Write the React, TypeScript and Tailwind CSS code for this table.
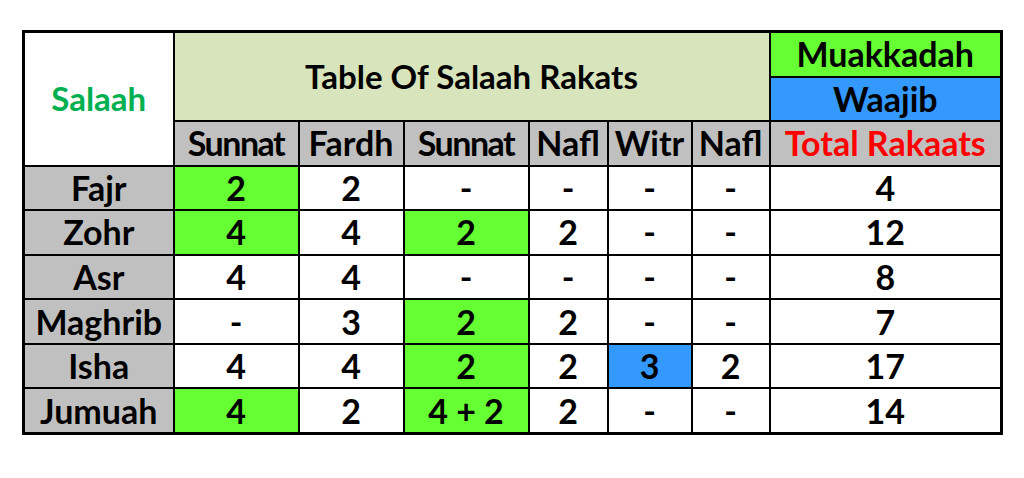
const FONT = "font-['Lato','Open_Sans',sans-serif]";

type Cell = { v: string; bg?: string };

const ROWS: { name: string; cells: Cell[]; total: string }[] = [
  {
    name: "Fajr",
    cells: [{ v: "2", bg: "bg-[#66ff33]" }, { v: "2" }, { v: "-" }, { v: "-" }, { v: "-" }, { v: "-" }],
    total: "4",
  },
  {
    name: "Zohr",
    cells: [{ v: "4", bg: "bg-[#66ff33]" }, { v: "4" }, { v: "2", bg: "bg-[#66ff33]" }, { v: "2" }, { v: "-" }, { v: "-" }],
    total: "12",
  },
  {
    name: "Asr",
    cells: [{ v: "4" }, { v: "4" }, { v: "-" }, { v: "-" }, { v: "-" }, { v: "-" }],
    total: "8",
  },
  {
    name: "Maghrib",
    cells: [{ v: "-" }, { v: "3" }, { v: "2", bg: "bg-[#66ff33]" }, { v: "2" }, { v: "-" }, { v: "-" }],
    total: "7",
  },
  {
    name: "Isha",
    cells: [{ v: "4" }, { v: "4" }, { v: "2", bg: "bg-[#66ff33]" }, { v: "2" }, { v: "3", bg: "bg-[#3399ff]" }, { v: "2" }],
    total: "17",
  },
  {
    name: "Jumuah",
    cells: [{ v: "4", bg: "bg-[#66ff33]" }, { v: "2" }, { v: "4 + 2", bg: "bg-[#66ff33]" }, { v: "2" }, { v: "-" }, { v: "-" }],
    total: "14",
  },
];

const HEADS = ["Sunnat", "Fardh", "Sunnat", "Nafl", "Witr", "Nafl"];

const td = "border-2 border-black text-center align-middle p-0 leading-none whitespace-nowrap";

export default function App() {
  return (
    <div className={`w-[1024px] h-[478px] bg-white pt-[30px] pl-[22px] ${FONT}`}>
      <table className="border-collapse border-[3px] border-black table-fixed w-[980px] font-bold text-[34px] text-black">
        <colgroup>
          <col className="w-[150px]" />
          <col className="w-[125px]" />
          <col className="w-[105px]" />
          <col className="w-[125px]" />
          <col className="w-[79px]" />
          <col className="w-[84px]" />
          <col className="w-[78px]" />
          <col className="w-[232px]" />
        </colgroup>
        <tbody>
          <tr className="h-[45px]">
            <td rowSpan={3} className={`${td} bg-white text-[#00b050] text-[33px]`}>
              Salaah
            </td>
            <td colSpan={6} rowSpan={2} className={`${td} bg-[#d8e4bc] text-[33px]`}>
              Table Of Salaah Rakats
            </td>
            <td className={`${td} bg-[#66ff33]`}>Muakkadah</td>
          </tr>
          <tr className="h-[44px]">
            <td className={`${td} bg-[#3399ff]`}>Waajib</td>
          </tr>
          <tr className="h-[45px]">
            {HEADS.map((h, i) => (
              <td
                key={i}
                className={`${td} bg-[#c0c0c0] ${h === "Sunnat" ? "tracking-[-1.5px]" : ""}`}
              >
                {h}
              </td>
            ))}
            <td className={`${td} bg-[#c0c0c0] text-[#ff0000]`}>Total Rakaats</td>
          </tr>
          {ROWS.map((r) => (
            <tr key={r.name} className="h-[44.6px]">
              <td className={`${td} bg-[#c0c0c0]`}>{r.name}</td>
              {r.cells.map((c, i) => (
                <td key={i} className={`${td} ${c.bg ?? "bg-white"}`}>
                  {c.v}
                </td>
              ))}
              <td className={`${td} bg-white`}>{r.total}</td>
            </tr>
          ))}
        </tbody>
      </table>
    </div>
  );
}
